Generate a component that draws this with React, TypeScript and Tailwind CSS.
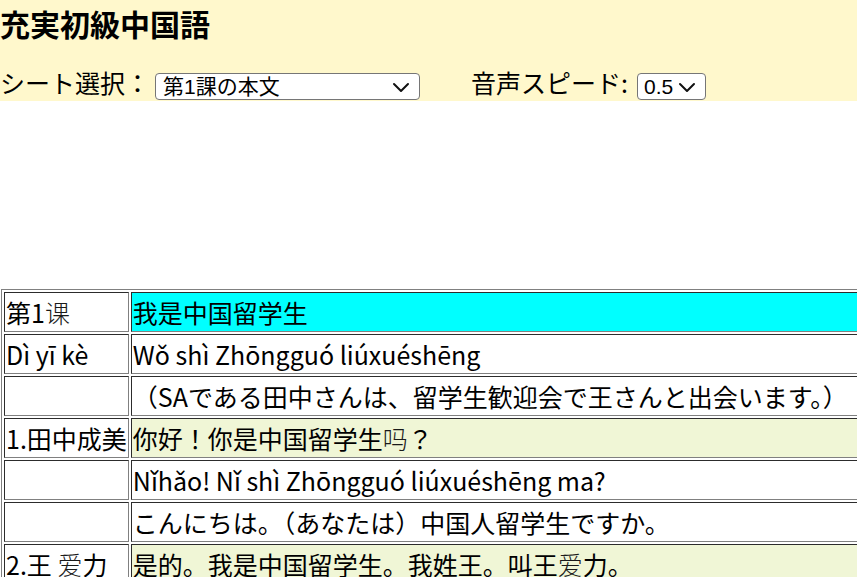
import React from "react";

const jp = "font-['Noto_Sans_CJK_JP','Noto_Sans_CJK_SC',sans-serif]";

// simplified-only glyphs fall back to a thinner face in the original page
const THIN = new Set(["课", "吗", "爱"]);

function Cjk({ text }: { text: string }) {
  const parts: React.ReactNode[] = [];
  let buf = "";
  [...text].forEach((ch, i) => {
    if (THIN.has(ch)) {
      if (buf) parts.push(buf);
      buf = "";
      parts.push(
        <span key={i} className="font-['Noto_Sans_CJK_SC',sans-serif] font-extralight text-[#1a1a1a]">
          {ch}
        </span>
      );
    } else {
      buf += ch;
    }
  });
  if (buf) parts.push(buf);
  return <>{parts}</>;
}

const rows: { label: string; text: string; bg?: string }[] = [
  { label: "第1课", text: "我是中国留学生", bg: "bg-[#00ffff]" },
  { label: "Dì yī kè", text: "Wǒ shì Zhōngguó liúxuéshēng" },
  { label: "", text: "（SAである田中さんは、留学生歓迎会で王さんと出会います。）" },
  { label: "1.田中成美", text: "你好！你是中国留学生吗？", bg: "bg-[#f0f6d6]" },
  { label: "", text: "Nǐhǎo! Nǐ shì Zhōngguó liúxuéshēng ma?" },
  { label: "", text: "こんにちは。（あなたは）中国人留学生ですか。" },
  { label: "2.王 爱力", text: "是的。我是中国留学生。我姓王。叫王爱力。", bg: "bg-[#f0f6d6]" },
  { label: "", text: "Shì de. Wǒ shì Zhōngguó liúxuéshēng. Wǒ xìng Wáng. Jiào Wáng Àilì." },
];

function Chevron() {
  return (
    <svg
      className="pointer-events-none absolute right-[9px] top-1/2 -translate-y-1/2"
      width="20"
      height="12"
      viewBox="0 0 20 12"
      fill="none"
    >
      <path d="M3 3l7 7 7-7" stroke="#111" strokeWidth="2" strokeLinecap="round" strokeLinejoin="round" />
    </svg>
  );
}

export default function App() {
  return (
    <div className={`w-[857px] h-[577px] overflow-hidden bg-white text-black ${jp}`}>
      {/* Header */}
      <div className="bg-[#fff8cc] pb-px">
        <h1 className="pt-[2px] h-[45px] text-[30px] leading-[43px] font-bold whitespace-nowrap">
          充実初級中国語
        </h1>
        <div className="mt-[19px] h-[36px] flex items-end text-[25px] leading-[36px] whitespace-nowrap">
          <span>シート選択：</span>
          <div className="relative ml-[5px]">
            <select className="appearance-none block w-[265px] h-[27px] bg-white border border-[#767676] rounded-[4px] pl-[7px] text-[21px] leading-[25px] font-['Liberation_Sans','Noto_Sans_CJK_JP',sans-serif]">
              <option>第1課の本文</option>
              <option>第2課の本文</option>
            </select>
            <Chevron />
          </div>
          <span className="ml-[51px]">音声スピード:</span>
          <div className="relative ml-[9px]">
            <select className="appearance-none block w-[69px] h-[27px] bg-white border border-[#767676] rounded-[4px] pl-[6px] text-[21px] leading-[25px] font-['Liberation_Sans',sans-serif]">
              <option>0.5</option>
              <option>0.75</option>
              <option>1.0</option>
            </select>
            <Chevron />
          </div>
        </div>
      </div>

      {/* Lesson table */}
      <table className="mt-[188px] ml-px border-separate border-spacing-[2px] border border-[#808080] [border-style:outset] text-[25px] leading-[36px]">
        <tbody>
          {rows.map((r, i) => (
            <tr key={i}>
              <td className="w-[127px] p-px border border-[#808080] [border-style:inset] whitespace-nowrap align-middle">
                <Cjk text={r.label} />
              </td>
              <td className={`w-[780px] p-px border border-[#808080] [border-style:inset] whitespace-nowrap align-middle ${r.bg ?? ""}`}>
                <Cjk text={r.text} />
              </td>
            </tr>
          ))}
        </tbody>
      </table>
    </div>
  );
}
